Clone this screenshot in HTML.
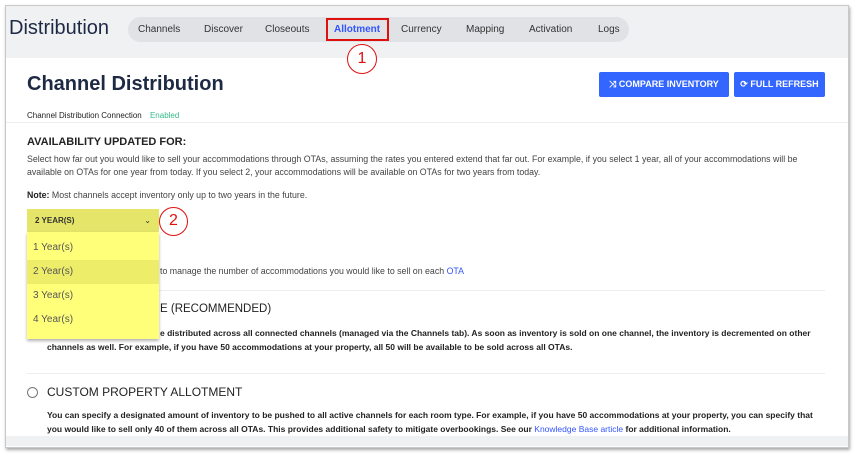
<!DOCTYPE html>
<html><head><style>
*{margin:0;padding:0;box-sizing:border-box}
body{width:855px;height:454px;background:#fff;font-family:"Liberation Sans",sans-serif;position:relative;overflow:hidden;color:#222}
.a{position:absolute;white-space:nowrap}
.frame{position:absolute;left:5px;top:5px;width:844px;height:443px;border:1px solid #c8c8c8;box-shadow:1px 2px 3px rgba(0,0,0,.35);background:#fff}
.hdr{position:absolute;left:6px;top:6px;width:842px;height:52px;background:#f0f1f3}
.nav{position:absolute;left:128px;top:17px;width:501px;height:25px;border-radius:13px;background:#e1e2e5}
.nav span{position:absolute;top:7px;font-size:10px;color:#333}
.t{font-size:8.8px;color:#444}
.b{font-size:8.5px;color:#222;font-weight:bold}
.btn{position:absolute;top:72px;height:25px;background:#3366ff;color:#fff;font-size:9px;font-weight:bold;line-height:25px;text-align:center;border-radius:2px}
.dd div{position:absolute;left:0;width:132px;height:24px;font-size:10px;color:#555;padding-left:6px;line-height:24px}
</style></head><body>
<div class="frame"></div>
<div class="hdr"></div>
<div class="a" style="left:9px;top:17px;font-size:20px;color:#1e2a44">Distribution</div>
<div class="nav">
<span style="left:10px">Channels</span>
<span style="left:76px">Discover</span>
<span style="left:137px">Closeouts</span>
<span style="left:206px;color:#3355ff;font-weight:bold">Allotment</span>
<span style="left:273px">Currency</span>
<span style="left:338px">Mapping</span>
<span style="left:401px">Activation</span>
<span style="left:470px">Logs</span>
</div>
<div class="a" style="left:326px;top:18px;width:63px;height:23px;border:2px solid #e01010"></div>
<div class="a" style="left:347px;top:44px;width:30px;height:30px;border:1.5px solid #e01010;border-radius:50%;background:#fff;text-align:center;line-height:27px;font-size:16px;color:#e01010">1</div>

<div class="a" style="left:27px;top:73px;font-size:20px;font-weight:bold;color:#1e2a44">Channel Distribution</div>
<div class="btn" style="left:599px;width:130px">⤨ COMPARE INVENTORY</div>
<div class="btn" style="left:734px;width:91px">⟳ FULL REFRESH</div>
<div class="a" style="left:27px;top:111px;font-size:8px;color:#222">Channel Distribution Connection <span style="color:#33bb88;margin-left:6px">Enabled</span></div>
<div class="a" style="left:6px;top:122px;width:842px;height:1px;background:#eee"></div>

<div class="a" style="left:27px;top:136px;font-size:11px;color:#222;font-weight:bold">AVAILABILITY UPDATED FOR:</div>
<div class="a t" style="left:27px;top:154px">Select how far out you would like to sell your accommodations through OTAs, assuming the rates you entered extend that far out. For example, if you select 1 year, all of your accommodations will be</div>
<div class="a t" style="left:27px;top:167px">available on OTAs for one year from today. If you select 2, your accommodations will be available on OTAs for two years from today.</div>
<div class="a t" style="left:27px;top:190px"><b style="color:#222">Note:</b> Most channels accept inventory only up to two years in the future.</div>

<div class="a t" style="left:160px;top:266px">to manage the number of accommodations you would like to sell on each <span style="color:#3355ff">OTA</span></div>
<div class="a" style="left:27px;top:290px;width:798px;height:1px;background:#eee"></div>
<div class="a" style="left:160px;top:303px;font-size:11.5px;color:#222">E (RECOMMENDED)</div>
<div class="a b" style="left:160px;top:328px">e distributed across all connected channels (managed via the Channels tab). As soon as inventory is sold on one channel, the inventory is decremented on other</div>
<div class="a b" style="left:47px;top:342px">channels as well. For example, if you have 50 accommodations at your property, all 50 will be available to be sold across all OTAs.</div>
<div class="a" style="left:27px;top:373px;width:798px;height:1px;background:#eee"></div>
<div class="a" style="left:27px;top:387px;width:11px;height:11px;border:1px solid #777;border-radius:50%"></div>
<div class="a" style="left:47px;top:385px;font-size:12px;color:#222">CUSTOM PROPERTY ALLOTMENT</div>
<div class="a b" style="left:47px;top:410px">You can specify a designated amount of inventory to be pushed to all active channels for each room type. For example, if you have 50 accommodations at your property, you can specify that</div>
<div class="a b" style="left:47px;top:424px">you would like to sell only 40 of them across all OTAs. This provides additional safety to mitigate overbookings. See our <span style="color:#3355ff;font-weight:normal">Knowledge Base article</span> for additional information.</div>
<div class="a" style="left:6px;top:436px;width:842px;height:10px;background:#f0f1f3"></div>

<div class="a" style="left:27px;top:209px;width:132px;height:23px;background:#e5e56a;font-size:8px;font-weight:bold;color:#333;line-height:23px;padding-left:8px">2 YEAR(S)<span style="position:absolute;right:8px;font-weight:normal">⌄</span></div>
<div class="a dd" style="left:27px;top:232px;width:132px;height:107px;background:#ffff7a;box-shadow:0 2px 3px rgba(0,0,0,.3)">
<div style="top:4px">1 Year(s)</div>
<div style="top:28px;background:#eded6a">2 Year(s)</div>
<div style="top:52px">3 Year(s)</div>
<div style="top:76px">4 Year(s)</div>
</div>
<div class="a" style="left:159px;top:207px;width:29px;height:29px;border:1.5px solid #e01010;border-radius:50%;background:#fff;text-align:center;line-height:26px;font-size:16px;color:#e01010">2</div>
</body></html>
